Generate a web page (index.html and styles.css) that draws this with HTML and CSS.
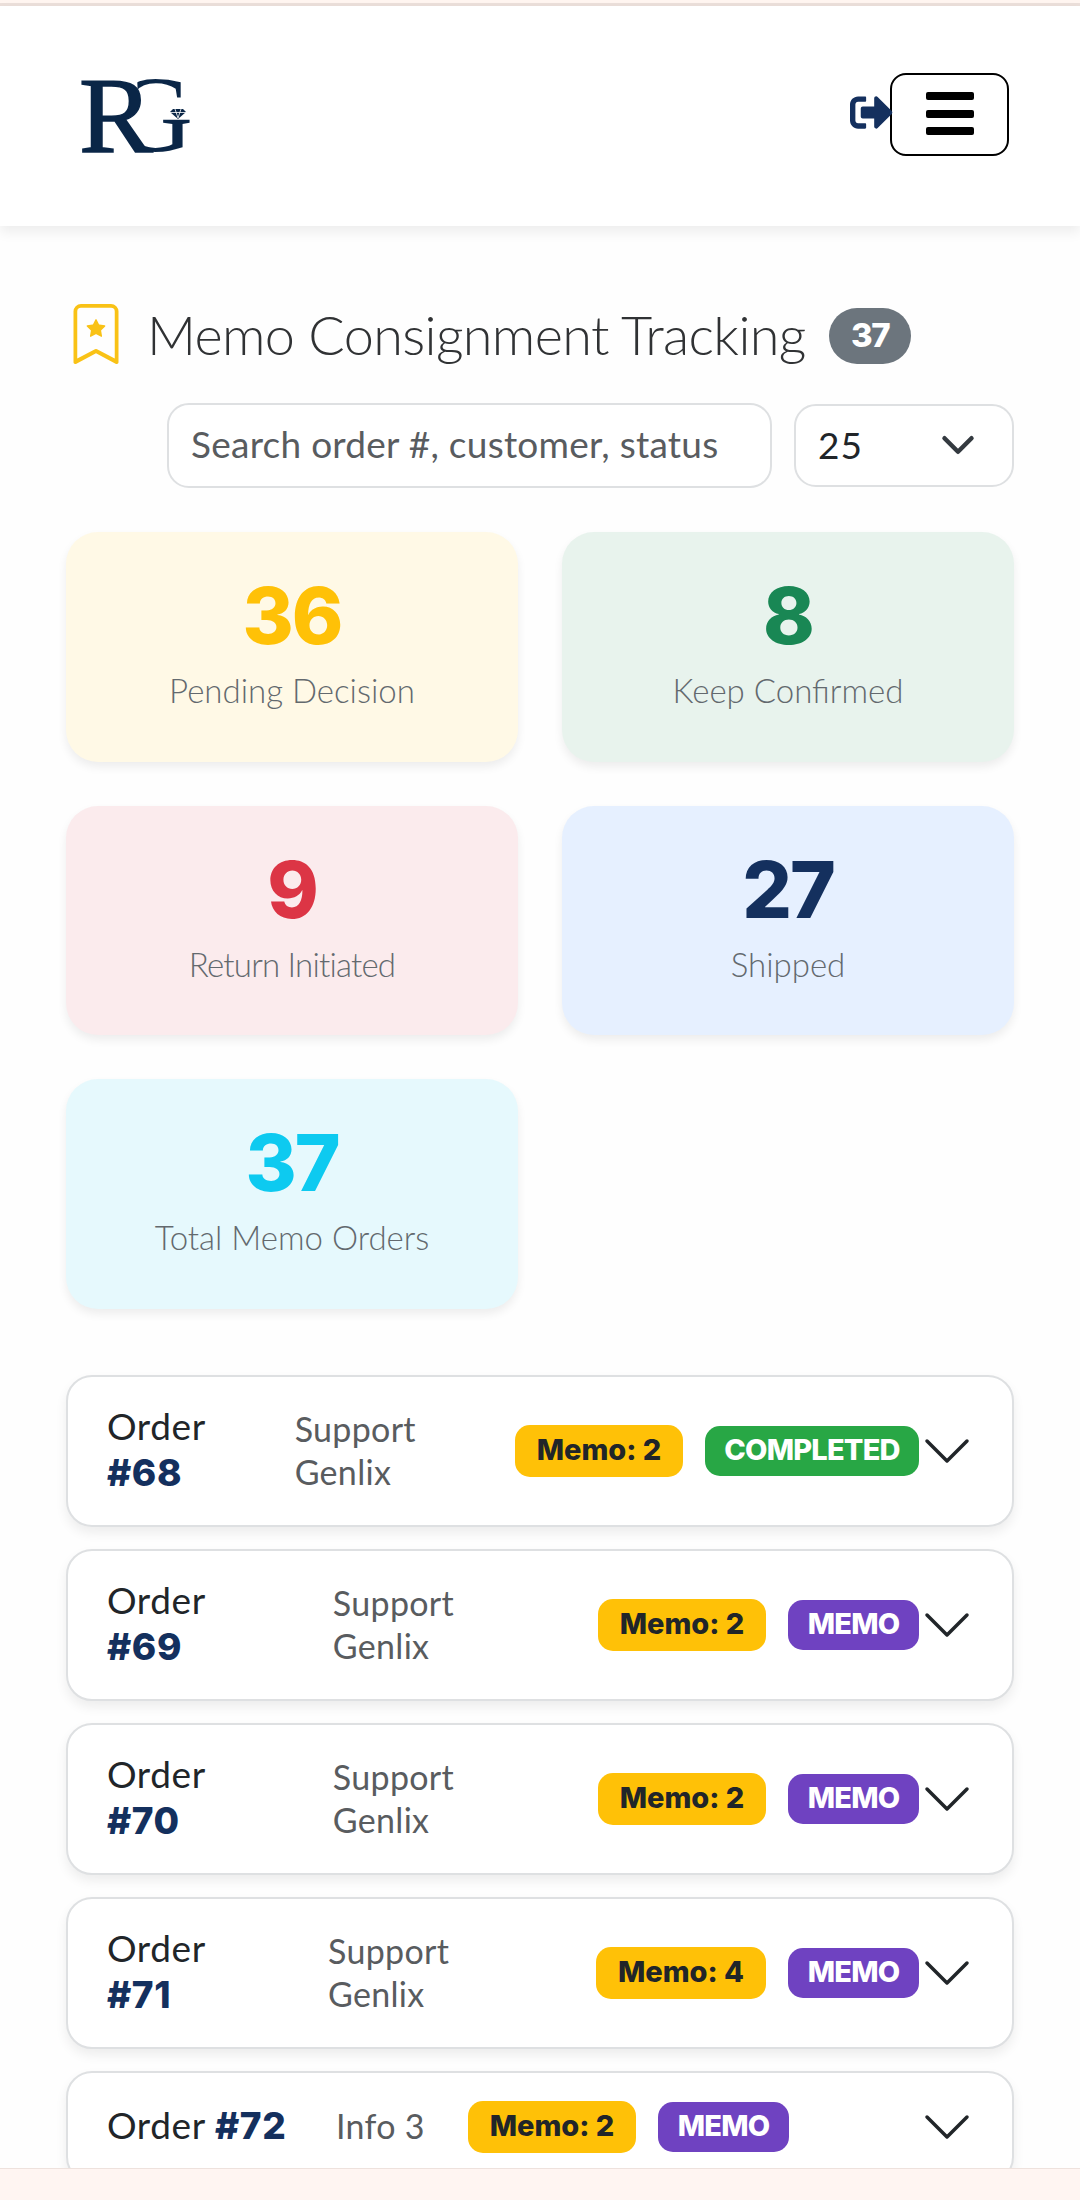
FILE: index.html
```html
<!DOCTYPE html>
<html lang="en">
<head>
  <meta charset="UTF-8">
  <meta name="viewport" content="width=device-width, initial-scale=1.0">
  <title>Memo Consignment Tracking</title>
  <link rel="stylesheet" href="styles.css">
</head>
<body>
  <div id="app">
    <div class="top-strip"></div>

    <!-- Header -->
    <header>
      <svg class="logo" viewBox="0 0 116 80" role="img" aria-label="RG">
        <defs>
          <clipPath id="g-clip">
            <path d="M59 0H116V80H42V66L62 70L60 22Z" />
          </clipPath>
        </defs>
        <text x="1" y="76" class="logo-letter heavy" textLength="74" lengthAdjust="spacingAndGlyphs">R</text>
        <g clip-path="url(#g-clip)">
          <text x="36" y="75" class="logo-letter" textLength="79" lengthAdjust="spacingAndGlyphs">G</text>
        </g>
        <path class="logo-fill" d="M95 33h10l3 3-8 7-8-7z" />
        <path class="logo-facet" d="M92 36.500h16M97 33l3 9 3-9" />
        <rect class="logo-fill" x="90" y="45" width="18" height="2" />
      </svg>
      <div class="header-actions">
        <svg class="logout-icon" viewBox="0 0 512 512"><path d="M497 273L329 441c-15 15-41 4.500-41-17v-96H152c-13.300 0-24-10.700-24-24v-96c0-13.300 10.700-24 24-24h136V88c0-21.400 25.900-32 41-17l168 168c9.300 9.400 9.300 24.600 0 34zM192 436v-40c0-6.600-5.400-12-12-12H96c-17.700 0-32-14.300-32-32V160c0-17.700 14.300-32 32-32h84c6.600 0 12-5.400 12-12V76c0-6.600-5.400-12-12-12H96c-53 0-96 43-96 96v192c0 53 43 96 96 96h84c6.600 0 12-5.400 12-12z" /></svg>
        <button class="menu-btn" aria-label="Menu"><span></span><span></span><span></span></button>
      </div>
    </header>

    <main>
      <!-- Title -->
      <div class="title-row">
        <svg class="bookmark" viewBox="0 0 16 16">
          <path d="M7.840 4.100a.178.178 0 0 1 .32 0l.634 1.285a.18.18 0 0 0 .134.098l1.420.206c.145.021.204.2.098.303L9.420 6.993a.18.18 0 0 0-.051.158l.242 1.414a.178.178 0 0 1-.258.187l-1.270-.668a.18.18 0 0 0-.165 0l-1.270.668a.178.178 0 0 1-.257-.187l.242-1.414a.18.18 0 0 0-.05-.158l-1.030-1.001a.178.178 0 0 1 .098-.303l1.420-.206a.18.18 0 0 0 .134-.098z" />
          <path d="M2 2a2 2 0 0 1 2-2h8a2 2 0 0 1 2 2v13.500a.5.5 0 0 1-.777.416L8 13.101l-5.223 2.815A.5.5 0 0 1 2 15.500zm2-1a1 1 0 0 0-1 1v12.566l4.723-2.482a.5.5 0 0 1 .554 0L13 14.566V2a1 1 0 0 0-1-1z" />
        </svg>
        <h1>Memo Consignment Tracking</h1>
        <span class="count">37</span>
      </div>

      <!-- Filters -->
      <div class="filters">
        <input type="text" class="search" placeholder="Search order #, customer, status">
        <div class="page-size">
          <span>25</span>
          <svg class="select-arrow" viewBox="0 0 16 16"><path d="m2 5 6 6 6-6" /></svg>
        </div>
      </div>

      <!-- Stats -->
      <section class="stats">
        <div class="stat pending"><strong>36</strong><span>Pending Decision</span></div>
        <div class="stat keep"><strong>8</strong><span>Keep Confirmed</span></div>
        <div class="stat returned"><strong>9</strong><span>Return Initiated</span></div>
        <div class="stat shipped"><strong>27</strong><span>Shipped</span></div>
        <div class="stat total"><strong>37</strong><span>Total Memo Orders</span></div>
      </section>

      <!-- Orders -->
      <section class="orders">
        <div class="order">
          <div class="order-no">Order<br><b>#68</b></div>
          <div class="customer">Support<br>Genlix</div>
          <span class="badge memo-count">Memo: 2</span>
          <span class="badge completed">COMPLETED</span>
          <svg class="chevron" viewBox="0 0 48 48"><path d="M4 14 24 34 44 14" /></svg>
        </div>
        <div class="order">
          <div class="order-no">Order<br><b>#69</b></div>
          <div class="customer">Support<br>Genlix</div>
          <span class="badge memo-count">Memo: 2</span>
          <span class="badge memo">MEMO</span>
          <svg class="chevron" viewBox="0 0 48 48"><path d="M4 14 24 34 44 14" /></svg>
        </div>
        <div class="order">
          <div class="order-no">Order<br><b>#70</b></div>
          <div class="customer">Support<br>Genlix</div>
          <span class="badge memo-count">Memo: 2</span>
          <span class="badge memo">MEMO</span>
          <svg class="chevron" viewBox="0 0 48 48"><path d="M4 14 24 34 44 14" /></svg>
        </div>
        <div class="order narrow">
          <div class="order-no">Order<br><b>#71</b></div>
          <div class="customer">Support<br>Genlix</div>
          <span class="badge memo-count">Memo: 4</span>
          <span class="badge memo">MEMO</span>
          <svg class="chevron" viewBox="0 0 48 48"><path d="M4 14 24 34 44 14" /></svg>
        </div>
        <div class="order single">
          <div class="order-no">Order <b>#72</b></div>
          <div class="customer">Info 3</div>
          <span class="badge memo-count">Memo: 2</span>
          <span class="badge memo">MEMO</span>
          <svg class="chevron" viewBox="0 0 48 48"><path d="M4 14 24 34 44 14" /></svg>
        </div>
      </section>
    </main>

    <div class="bottom-strip"></div>
  </div>
</body>
</html>
```
FILE: styles.css
```css
* {
  box-sizing: border-box;
}

body {
  font-family: Lato, 'Open Sans', sans-serif;
  margin: 0;
  background-color: #fefefe;
  color: #212529;
}

#app {
  height: 2200px;
  overflow: hidden;
  display: flex;
  flex-direction: column;
}

.top-strip {
  height: 6px;
  flex: none;
  background-color: #fff5f0;
  border-bottom: 3px solid #ebdfda;
}

header {
  height: 220px;
  flex: none;
  padding: 0 71px 0 78px;
  display: flex;
  align-items: center;
  justify-content: space-between;
  background-color: #fff;
  box-shadow: 0 6px 12px rgba(0, 0, 0, 0.07);
}

.logo {
  width: 116px;
  height: 80px;
  overflow: visible;
}

.logo-letter {
  font-family: 'Liberation Serif', serif;
  font-size: 108px;
  fill: #0a2647;
}

.logo-letter.heavy {
  stroke: #0a2647;
  stroke-width: 1.5;
}

.logo-fill {
  fill: #0a2647;
}

.logo-facet {
  fill: none;
  stroke: #fff;
  stroke-width: 0.8;
}

.header-actions {
  display: flex;
  align-items: center;
}

.logout-icon {
  width: 43px;
  height: 43px;
  margin: -7px -3px 0 0;
  fill: #14305e;
  z-index: 1;
}

.menu-btn {
  width: 119px;
  height: 83px;
  padding: 0 0 2px;
  margin-top: -3px;
  display: flex;
  flex-direction: column;
  align-items: center;
  justify-content: center;
  gap: 9.5px;
  background: none;
  border: 2px solid #000;
  border-radius: 16px;
}

.menu-btn span {
  width: 48px;
  height: 8px;
  border-radius: 2px;
  background-color: #000;
}

main {
  flex: 1;
  min-height: 0;
  overflow: hidden;
  padding: 70px 66px 0;
}

.title-row {
  height: 80px;
  display: flex;
  align-items: center;
}

.bookmark {
  width: 60px;
  height: 60px;
  margin-right: 21px;
  margin-top: -5px;
  fill: #f9c216;
}

h1 {
  width: 658px;
  margin: -3px 24px 0 0;
  font-size: 54px;
  font-weight: 300;
  letter-spacing: -0.65px;
  white-space: nowrap;
  color: #303234;
}

.count {
  width: 82px;
  height: 56px;
  border-radius: 28px;
  background-color: #6c757d;
  color: #fff;
  font-family: Inter, sans-serif;
  font-size: 33px;
  font-weight: 800;
  letter-spacing: -1.5px;
  line-height: 54px;
  text-align: center;
}

.filters {
  display: flex;
  justify-content: flex-end;
  align-items: center;
  gap: 22px;
  margin-top: 27px;
}

.search, .page-size {
  height: 85px;
  border: 2px solid #dee0e2;
  border-radius: 22px;
  background-color: #fff;
  font-family: inherit;
  font-size: 37px;
}

.search {
  width: 605px;
  padding: 0 22px 4px;
  letter-spacing: 0.25px;
}

.search::placeholder {
  color: #595c5f;
  opacity: 1;
}

.page-size {
  width: 220px;
  height: 83px;
  padding: 0 36px 2px 22px;
  display: flex;
  align-items: center;
  justify-content: space-between;
}

.page-size span {
  letter-spacing: 1px;
}

.select-arrow {
  width: 36px;
  height: 36px;
  fill: none;
  stroke: #343a40;
  stroke-width: 2;
  stroke-linecap: round;
  stroke-linejoin: round;
}

.stats {
  display: grid;
  grid-template-columns: 1fr 1fr;
  gap: 44px;
  margin-top: 44px;
}

.stat {
  height: 229.700px;
  padding-top: 37px;
  border-radius: 32px;
  box-shadow: 0 5px 10px rgba(0, 0, 0, 0.07);
  display: flex;
  flex-direction: column;
  align-items: center;
}

.stat strong {
  font-family: Inter, sans-serif;
  font-size: 78px;
  font-weight: 800;
  letter-spacing: -2px;
  line-height: 94px;
}

.stat span {
  font-size: 33px;
  font-weight: 300;
  line-height: 54px;
  color: #63696e;
}

.pending { background-color: #fff9e6; }
.pending strong { color: #ffc107; }
.keep { background-color: #e8f3ed; }
.keep strong { color: #198754; }
.returned { background-color: #fbebed; }
.returned strong { color: #dc3545; }
.returned span { letter-spacing: -0.8px; }
.shipped { background-color: #e6f0ff; }
.shipped strong { color: #14305e; }
.total { background-color: #e6f9fd; }
.total strong { color: #0dcaf0; }

.orders {
  display: flex;
  flex-direction: column;
  gap: 22px;
  margin-top: 66px;
}

.order {
  height: 152px;
  flex: none;
  padding: 0 41px 0 39px;
  border: 2px solid #dee0e2;
  border-radius: 26px;
  background-color: #fff;
  box-shadow: 0 6px 12px rgba(0, 0, 0, 0.07);
  display: flex;
  align-items: center;
}

.order-no {
  flex: 46 1 0;
  margin-top: -3px;
  font-size: 37px;
  letter-spacing: 0.6px;
  line-height: 46px;
  white-space: nowrap;
}

.order-no b {
  font-family: Inter, sans-serif;
  font-weight: 800;
  color: #14305e;
}

.customer {
  flex: 54 1 0;
  margin-top: -3px;
  font-size: 34px;
  letter-spacing: 0.3px;
  line-height: 43px;
  color: #595c5f;
}

.narrow .order-no {
  flex-grow: 45.2;
}

.narrow .customer {
  flex-grow: 54.8;
}

.badge {
  height: 50px;
  border-radius: 15px;
  font-family: Inter, sans-serif;
  font-size: 29px;
  font-weight: 800;
  letter-spacing: -0.8px;
  line-height: 48px;
  text-align: center;
  white-space: nowrap;
}

.memo-count {
  width: 168px;
  height: 52px;
  margin-right: 22px;
  background-color: #ffc107;
  line-height: 50px;
  letter-spacing: 0;
}

.narrow .memo-count {
  width: 170px;
}

.completed {
  width: 214px;
  background-color: #28a745;
  color: #fff;
}

.memo {
  width: 131px;
  background-color: #6f42c1;
  color: #fff;
}

.chevron {
  width: 48px;
  height: 48px;
  margin-left: 4px;
  fill: none;
  stroke: #212529;
  stroke-width: 3.500;
  stroke-linecap: round;
  stroke-linejoin: round;
}

.single {
  height: 112px;
}

.single .order-no {
  flex: none;
  width: 229px;
}

.single .customer {
  flex: none;
  width: 132px;
}

.single .chevron {
  margin-left: auto;
}

.bottom-strip {
  height: 32px;
  flex: none;
  background-color: #fff5f2;
  border-top: 1px solid #eee2dd;
}
```
